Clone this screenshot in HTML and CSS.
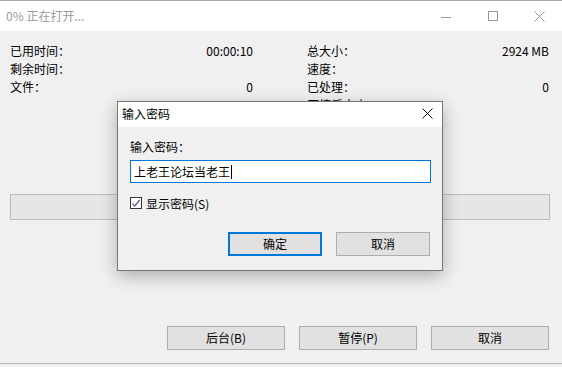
FILE: index.html
```html
<!DOCTYPE html>
<html lang="zh-CN">
<head>
<meta charset="utf-8">
<title>0% 正在打开...</title>
<link rel="stylesheet" href="styles.css">
</head>
<body>
<div class="window">
  <div class="titlebar">
    <span class="title">0% 正在打开...</span>
    <div class="controls">
      <svg class="ctl" width="46" height="30" viewBox="0 0 46 30"><line x1="17" y1="16.5" x2="27" y2="16.5" stroke="#9a9a9a" stroke-width="1"/></svg>
      <svg class="ctl" width="46" height="30" viewBox="0 0 46 30"><rect x="18.5" y="10.5" width="9" height="9" fill="none" stroke="#9a9a9a" stroke-width="1"/></svg>
      <svg class="ctl" width="46" height="30" viewBox="0 0 46 30"><path d="M18.5 10.5 L28.5 20.5 M28.5 10.5 L18.5 20.5" stroke="#9a9a9a" stroke-width="1"/></svg>
    </div>
  </div>
  <div class="content">
    <div class="stats">
      <div class="cell"><span>已用时间：</span><span>00:00:10</span></div>
      <div class="cell"><span>总大小：</span><span>2924 MB</span></div>
      <div class="cell"><span>剩余时间：</span><span></span></div>
      <div class="cell"><span>速度：</span><span></span></div>
      <div class="cell"><span>文件：</span><span>0</span></div>
      <div class="cell"><span>已处理：</span><span>0</span></div>
      <div class="cell"><span></span><span></span></div>
      <div class="cell"><span>压缩后大小：</span><span></span></div>
    </div>
    <div class="progress"></div>
    <div class="actions">
      <button class="btn">后台(B)</button>
      <button class="btn">暂停(P)</button>
      <button class="btn">取消</button>
    </div>
  </div>
</div>

<div class="dialog">
  <div class="dlg-title">
    <span>输入密码</span>
    <svg width="12" height="12" viewBox="0 0 12 12" class="dlg-close"><path d="M0.5 0.5 L10.5 10.5 M10.5 0.5 L0.5 10.5" stroke="#111" stroke-width="1"/></svg>
  </div>
  <div class="dlg-body">
    <div class="dlg-label">输入密码：</div>
    <div class="input"><span>上老王论坛当老王</span><span class="caret"></span></div>
    <label class="check">
      <span class="box"><svg width="11" height="11" viewBox="0 0 11 11"><path d="M1.5 5.5 L4 8.5 L9.5 1.5" fill="none" stroke="#2b3f6a" stroke-width="1.2"/></svg></span>
      <span>显示密码(S)</span>
    </label>
    <div class="dlg-actions">
      <button class="btn btn-default">确定</button>
      <button class="btn">取消</button>
    </div>
  </div>
</div>
</body>
</html>
```
FILE: styles.css
```css
* { box-sizing: border-box; }
html, body { margin: 0; padding: 0; }
body {
  width: 562px;
  height: 367px;
  background: #f0f0f0;
  font-family: "Noto Sans CJK SC", "Noto Sans", sans-serif;
  font-size: 12px;
  color: #000;
  position: relative;
  overflow: hidden;
}
.window {
  height: 364px;
  border-top: 1px solid #a8a8a8;
  border-bottom: 1px solid #b8b8b8;
  display: flex;
  flex-direction: column;
}
.titlebar {
  height: 30px;
  background: #fff;
  display: flex;
  align-items: center;
  justify-content: space-between;
  flex: none;
}
.title {
  padding-left: 6px;
  color: #9a9a9a;
  line-height: 16px;
  padding-bottom: 1px;
}
.controls { display: flex; align-items: flex-start; height: 30px; }
.ctl { display: block; }
.content {
  flex: 1;
  display: flex;
  flex-direction: column;
  padding: 11px 13px 13px 10px;
}
.stats {
  display: grid;
  grid-template-columns: 243px 242px;
  column-gap: 54px;
  line-height: 18px;
}
.cell {
  display: flex;
  justify-content: space-between;
  height: 18px;
}
.progress {
  margin-top: 80px;
  height: 26px;
  width: 540px;
  border: 1px solid #bcbcbc;
  background: #e6e6e6;
}
.actions {
  margin-top: auto;
  display: flex;
  justify-content: flex-end;
  gap: 14px;
}
.btn {
  font-family: inherit;
  font-size: 12px;
  color: #000;
  width: 118px;
  height: 24px;
  padding: 0;
  background: #e1e1e1;
  border: 1px solid #adadad;
  line-height: 20px;
}
.dialog {
  position: absolute;
  left: 117px;
  top: 101px;
  width: 326px;
  height: 170px;
  border: 1px solid #777;
  background: #f0f0f0;
  box-shadow: 0 5px 16px rgba(0,0,0,0.28);
  display: flex;
  flex-direction: column;
}
.dlg-title {
  height: 25px;
  background: #fff;
  display: flex;
  align-items: center;
  justify-content: space-between;
  padding: 0 8px 0 4px;
  flex: none;
}
.dlg-title span { line-height: 16px; padding-bottom: 1px; }
.dlg-close { display: block; margin-bottom: 1px; }
.dlg-body {
  padding: 11px 11px 0 12px;
}
.dlg-label { line-height: 18px; }
.input {
  margin-top: 4px;
  height: 23px;
  border: 1px solid #0078d7;
  background: #fff;
  display: flex;
  align-items: center;
  padding-left: 3px;
  line-height: 16px;
}
.caret {
  width: 1px;
  height: 14px;
  background: #000;
  margin-left: 1px;
}
.check {
  margin-top: 11px;
  display: flex;
  align-items: center;
  height: 18px;
  gap: 4px;
}
.box {
  width: 12px;
  height: 12px;
  border: 1px solid #333;
  background: #fff;
  display: flex;
  align-items: center;
  justify-content: center;
}
.box svg { display: block; }
.dlg-actions {
  margin-top: 20px;
  display: flex;
  justify-content: flex-end;
  gap: 14px;
  padding-right: 1px;
}
.dlg-actions .btn { width: 94px; }
.btn-default {
  border: 2px solid #0078d7;
}
```
